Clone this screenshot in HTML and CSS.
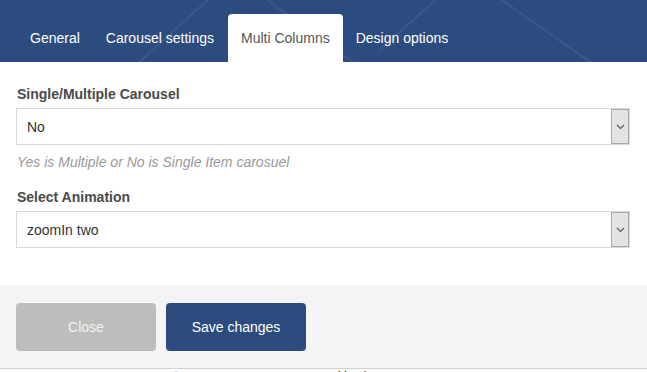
FILE: index.html
```html
<!DOCTYPE html>
<html>
<head>
<meta charset="utf-8">
<link rel="stylesheet" href="styles.css">
</head>
<body>
<div class="modal">
  <div class="header">
    <svg class="deco" width="647" height="62" viewBox="0 0 647 62">
      <path d="M124 76 L212 -4 M262 -4 L372 76 M496 -4 L596 66 L560 80 M440 -4 L380 50" fill="none" stroke="rgba(255,255,255,0.07)" stroke-width="2"/>
    </svg>
    <div class="tab">General</div>
    <div class="tab">Carousel settings</div>
    <div class="tab active">Multi Columns</div>
    <div class="tab">Design options</div>
  </div>
  <div class="content">
    <div class="label">Single/Multiple Carousel</div>
    <div class="select"><span class="value">No</span><span class="arrow"><svg width="9" height="6" viewBox="0 0 9 6"><path d="M1 1 L4.5 4.5 L8 1" fill="none" stroke="#555" stroke-width="1.1"/></svg></span></div>
    <div class="help">Yes is Multiple or No is Single Item carosuel</div>
    <div class="label second">Select Animation</div>
    <div class="select"><span class="value">zoomIn two</span><span class="arrow"><svg width="9" height="6" viewBox="0 0 9 6"><path d="M1 1 L4.5 4.5 L8 1" fill="none" stroke="#555" stroke-width="1.1"/></svg></span></div>
  </div>
  <div class="footer">
    <button class="btn close">Close</button>
    <button class="btn save">Save changes</button>
  </div>
  <div class="strip">
    <span class="s1">payments</span>
    <span class="s2">You have any</span>
  </div>
</div>
</body>
</html>
```
FILE: styles.css
```css
html, body {
  margin: 0;
  padding: 0;
}
body {
  width: 647px;
  height: 372px;
  overflow: hidden;
  font-family: "Liberation Sans", Arial, sans-serif;
  background: #fff;
}
.header {
  position: relative;
  height: 62px;
  box-sizing: border-box;
  padding: 14px 0 0 17px;
  background: #2c4c80;
  display: flex;
  overflow: hidden;
}
.deco {
  position: absolute;
  left: 0;
  top: 0;
}
.tab {
  position: relative;
  height: 48px;
  line-height: 49px;
  padding: 0 13px;
  font-size: 14px;
  color: #fff;
  border-radius: 4px 4px 0 0;
}
.tab.active {
  margin-left: 1px;
  background: #fff;
  color: #555;
}
.content {
  padding: 24px 17px 37px 16px;
}
.label {
  font-size: 14px;
  font-weight: bold;
  color: #4a4a4a;
  line-height: 16px;
  padding-left: 1px;
  margin-bottom: 6px;
}
.label.second {
  margin-top: 19px;
}
.select {
  height: 37px;
  box-sizing: border-box;
  border: 1px solid #d9d9d9;
  display: flex;
  align-items: center;
  justify-content: space-between;
}
.value {
  font-size: 14px;
  color: #333;
  padding-left: 10px;
}
.arrow {
  width: 16px;
  height: 33px;
  border: 1px solid #a9a9a9;
  background: #e3e3e3;
  display: flex;
  align-items: center;
  justify-content: center;
}
.help {
  margin-top: 9px;
  font-size: 14px;
  font-style: italic;
  color: #9a9a9a;
  line-height: 16px;
  padding-left: 1px;
}
.footer {
  height: 83px;
  box-sizing: border-box;
  background: #f4f4f4;
  padding: 18px 16px 0;
  display: flex;
  gap: 10px;
}
.btn {
  width: 140px;
  height: 48px;
  border: none;
  border-radius: 4px;
  font-family: "Liberation Sans", Arial, sans-serif;
  font-size: 14px;
  color: #fff;
}
.btn.close {
  background: #bdbdbd;
  color: #f2f2f2;
}
.btn.save {
  background: #2c4c80;
}
.strip {
  height: 4px;
  border-top: 1px solid #d0d0d0;
  background: #fff;
  overflow: hidden;
  position: relative;
  font-size: 13px;
  color: #333;
}
.strip span {
  position: absolute;
  top: -1px;
}
.s1 { left: 128px; }
.s2 { left: 338px; }
```
